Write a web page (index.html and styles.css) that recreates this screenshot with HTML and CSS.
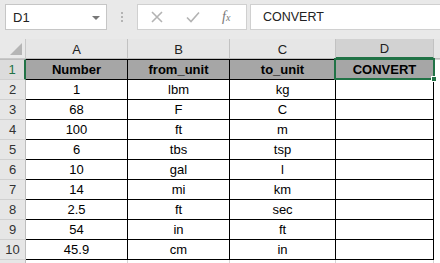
FILE: index.html
```html
<!DOCTYPE html>
<html>
<head>
<meta charset="utf-8">
<link rel="stylesheet" href="styles.css">
</head>
<body>
<div class="app">
  <div class="toolbar">
    <div class="namebox"><span>D1</span><span class="dd"></span></div>
    <div class="dots"><i></i><i></i><i></i></div>
    <div class="btns">
      <svg class="ic" width="14" height="14" viewBox="0 0 14 14"><path d="M2 2L12 12M12 2L2 12" stroke="#b3b3b3" stroke-width="1.6" fill="none"/></svg>
      <svg class="ic" width="16" height="14" viewBox="0 0 16 14"><path d="M2 7.5L6 11.5L14 2.5" stroke="#b3b3b3" stroke-width="1.6" fill="none"/></svg>
      <span class="fx">f<small>x</small></span>
    </div>
    <div class="formula">CONVERT</div>
  </div>
  <div class="sheet">
    <div class="grid">
      <div class="corner"><span class="tri"></span></div>
      <div class="ch">A</div><div class="ch">B</div><div class="ch">C</div><div class="ch sel">D</div><div class="ch last"></div>

      <div class="rh first selr">1</div><div class="c hd first">Number</div><div class="c hd first">from_unit</div><div class="c hd first">to_unit</div><div class="c hd first">CONVERT</div><div class="e first"></div>
      <div class="rh">2</div><div class="c">1</div><div class="c">lbm</div><div class="c">kg</div><div class="c"></div><div class="e"></div>
      <div class="rh">3</div><div class="c">68</div><div class="c">F</div><div class="c">C</div><div class="c"></div><div class="e"></div>
      <div class="rh">4</div><div class="c">100</div><div class="c">ft</div><div class="c">m</div><div class="c"></div><div class="e"></div>
      <div class="rh">5</div><div class="c">6</div><div class="c">tbs</div><div class="c">tsp</div><div class="c"></div><div class="e"></div>
      <div class="rh">6</div><div class="c">10</div><div class="c">gal</div><div class="c">l</div><div class="c"></div><div class="e"></div>
      <div class="rh">7</div><div class="c">14</div><div class="c">mi</div><div class="c">km</div><div class="c"></div><div class="e"></div>
      <div class="rh">8</div><div class="c">2.5</div><div class="c">ft</div><div class="c">sec</div><div class="c"></div><div class="e"></div>
      <div class="rh">9</div><div class="c">54</div><div class="c">in</div><div class="c">ft</div><div class="c"></div><div class="e"></div>
      <div class="rh">10</div><div class="c">45.9</div><div class="c">cm</div><div class="c">in</div><div class="c"></div><div class="e"></div>
      <div class="rh"></div><div class="g"></div><div class="g"></div><div class="g"></div><div class="g"></div><div class="e"></div>
    </div>
    <div class="selbox"><span class="handle"></span></div>
  </div>
</div>
</body>
</html>
```
FILE: styles.css
```css
* { box-sizing: border-box; }
html, body { margin: 0; padding: 0; }
body {
  width: 440px; height: 263px; overflow: hidden;
  background: #ffffff;
  font-family: "Liberation Sans", Arial, sans-serif;
  color: #000;
}
.app { width: 440px; }
.toolbar {
  height: 39px;
  background: #e9e9e9;
  display: flex;
  align-items: flex-start;
  padding-top: 4px;
  padding-left: 5px;
}
.namebox {
  width: 102px; height: 26px;
  background: #fff;
  border: 1px solid #c6c6c6;
  display: flex; align-items: center; justify-content: space-between;
  padding: 0 6px 0 7px;
  font-size: 13px; color: #222;
}
.dd {
  width: 0; height: 0;
  border-left: 4px solid transparent;
  border-right: 4px solid transparent;
  border-top: 4px solid #777;
  margin-top: 1px;
}
.dots {
  width: 30px; height: 26px;
  display: flex; flex-direction: column; align-items: center; justify-content: center; gap: 2px;
}
.dots i { display: block; width: 2px; height: 2px; background: #b4b4b4; }
.btns {
  width: 110px; height: 26px;
  background: #fff;
  border: 1px solid #d0d0d0;
  display: flex; align-items: center;
  padding-left: 12px;
}
.btns .ic { display: block; }
.btns .ic + .ic { margin-left: 21px; }
.fx {
  margin-left: 21px;
  font-family: "Liberation Serif", "Times New Roman", serif;
  font-style: italic; font-size: 14px; color: #777;
}
.fx small { font-size: 10px; }
.formula {
  flex: 1; height: 26px;
  margin-left: 3px;
  background: #fff;
  border: 1px solid #d0d0d0;
  border-right: none;
  display: flex; align-items: center;
  padding-left: 12px;
  font-size: 12.5px; color: #222;
}
.sheet { position: relative; height: 224px; overflow: hidden; }
.grid {
  display: grid;
  grid-template-columns: 26px 102px 102px 106px 98px 6px;
  grid-template-rows: 20px 21px repeat(10, 20px);
  font-size: 13px;
}
.corner {
  background: #e9e9e9;
  border-right: 1px solid #c8c8c8;
  border-bottom: 1px solid #c8c8c8;
  position: relative;
}
.tri {
  position: absolute; right: 3px; bottom: 3px;
  width: 0; height: 0;
  border-left: 12px solid transparent;
  border-bottom: 12px solid #b5b5b5;
}
.ch {
  background: #e6e6e6;
  border-right: 1px solid #c2c2c2;
  border-bottom: 1px solid #bdbdbd;
  display: flex; align-items: center; justify-content: center;
  color: #222;
  padding-top: 1px;
}
.ch.sel {
  background: #d2d2d2;
  border-bottom: 2px solid #217346;
  color: #222;
}
.ch.last { border-right: none; }
.rh {
  background: #e6e6e6;
  border-right: 1px solid #bdbdbd;
  border-bottom: 1px solid #d0d0d0;
  display: flex; align-items: center; justify-content: center;
  color: #333;
  font-size: 13px;
}
.rh.first { border-top: 1px solid #bdbdbd; }
.rh.selr { border-right: 2px solid #217346; color: #217346; background: #dcdcdc; }
.c {
  border-right: 1px solid #000;
  border-bottom: 1px solid #000;
  display: flex; align-items: center; justify-content: center;
  background: #fff;
}
.c.first { border-top: 1px solid #000; }
.c.hd { background: #a6a6a6; font-weight: bold; }
.g { border-right: 1px solid #d4d4d4; }
.e { background: #fff; }
.e.first { border-top: 1px solid #d4d4d4; }
.selbox {
  position: absolute;
  left: 334px; top: 19px;
  width: 101px; height: 22px;
  border: 2px solid #217346;
  pointer-events: none;
}
.handle {
  position: absolute;
  right: -4px; bottom: -4px;
  width: 6px; height: 6px;
  background: #217346;
  border: 1px solid #fff;
}
```
